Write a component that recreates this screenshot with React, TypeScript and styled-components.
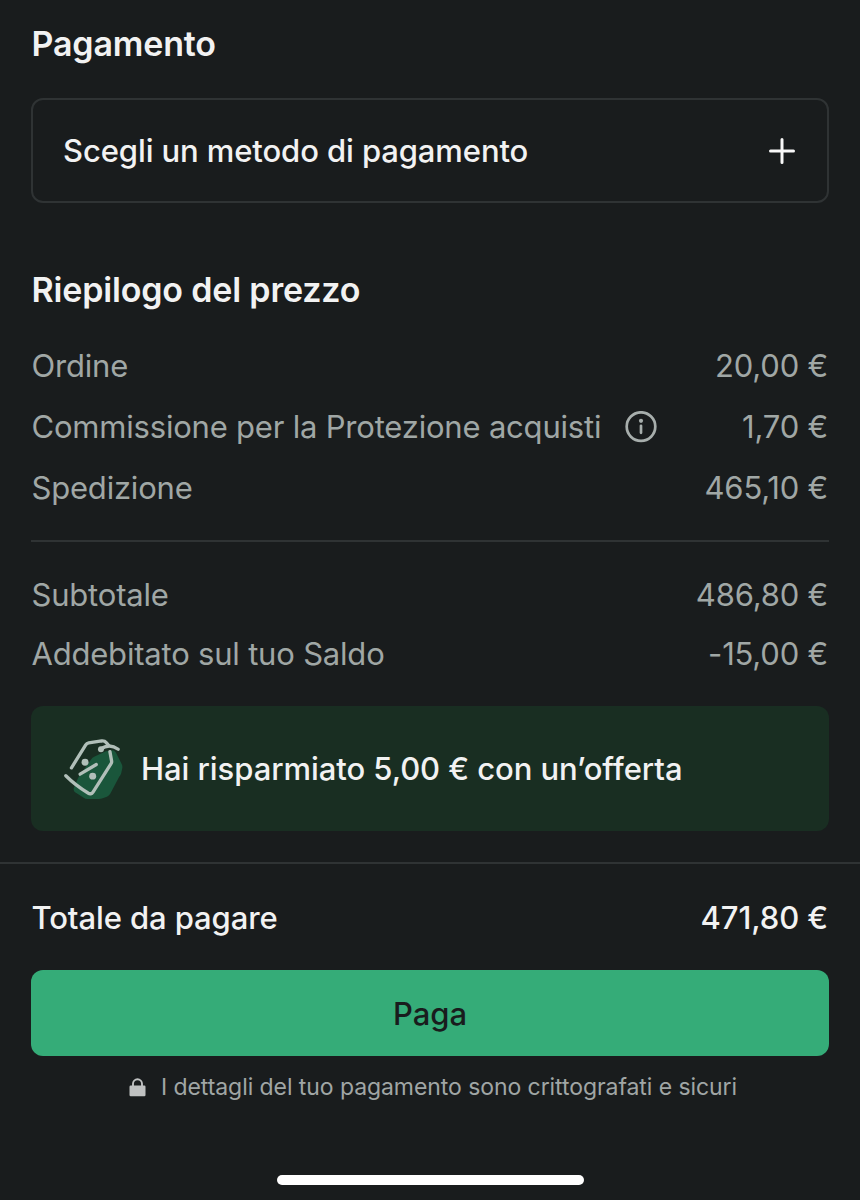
import React from 'react';
import styled, { createGlobalStyle } from 'styled-components';

const GlobalStyle = createGlobalStyle`
  * { box-sizing: border-box; }
  body { margin: 0; background: #191c1d; font-family: Inter, "Liberation Sans", sans-serif; }
`;
const Screen = styled.main`
  width: 860px; height: 1200px; background: #191c1d; color: #f2f2f2;
  display: flex; flex-direction: column; overflow: hidden;
`;
const Section = styled.section`padding: 0 31px;`;
const Heading = styled.h2<{ $top: number }>`
  margin: 0; padding: ${p => p.$top}px 0 0 0.5px; font-size: 34px; line-height: 44px; font-weight: 600; letter-spacing: -0.17px;
`;
const MethodButton = styled.button`
  margin-top: 32px; width: 100%; height: 105px; padding: 0 32px 0 30px; display: flex; align-items: center; justify-content: space-between;
  border: 2px solid #2f3334; border-radius: 12px; background: none; color: inherit; font: 500 31px Inter, sans-serif; letter-spacing: -0.1px;
`;
const Row = styled.div<{ $h: number; $strong?: boolean }>`
  display: flex; align-items: center; justify-content: space-between; height: ${p => p.$h}px; padding: 0 1px 0 0.5px;
  font-size: 31px; font-weight: ${p => (p.$strong ? 500 : 400)}; color: ${p => (p.$strong ? '#f2f2f2' : '#a0a7a5')};
  letter-spacing: ${p => (p.$strong ? '-0.1px' : '-0.2px')};
`;
const Label = styled.span`display: flex; align-items: center; gap: 24px;`;
const Rows = styled.div<{ $top: number }>`padding-top: ${p => p.$top}px;`;
const Divider = styled.div<{ $top: number }>`flex-shrink: 0; height: 2px; background: #2f3334; margin-top: ${p => p.$top}px;`;
const Banner = styled.div`
  margin-top: 23px; height: 125px; border-radius: 12px; background: #192e22; display: flex; align-items: center; gap: 17px;
  padding-left: 33px; font-size: 31px; font-weight: 500; letter-spacing: -0.06px;
`;
const PayButton = styled.button`
  margin-top: 23px; width: 100%; height: 86px; border: 0; border-radius: 12px; background: #35ac78; color: #191c1d;
  font: 500 31px Inter, sans-serif;
`;
const Secure = styled.p`
  margin: 15px 0 0; padding-left: 6px; display: flex; justify-content: center; align-items: center; gap: 15px; height: 32px;
  font-size: 23px; color: #a0a6a5; letter-spacing: -0.07px;
`;
const HomeBar = styled.div`flex-shrink: 0; width: 307px; height: 10px; border-radius: 5px; background: #fff; margin: 72px auto 0;`;

const PlusIcon = () => (
  <svg width="26" height="26" viewBox="0 0 26 26" stroke="#f8f8f8" strokeWidth="3" strokeLinecap="round">
    <path d="M13 1.5v23M1.5 13h23" />
  </svg>
);
const InfoIcon = () => (
  <svg width="32" height="32" viewBox="0 0 32 32" fill="none" stroke="#a7aeac" strokeWidth="2.7" strokeLinecap="round">
    <circle cx="16" cy="15.6" r="14.3" />
    <path d="M16 14.8v7" />
    <circle cx="16" cy="9.8" r="2.1" fill="#a7aeac" stroke="none" />
  </svg>
);
const TagIcon = () => (
  <svg width="60" height="62" viewBox="42 37 180 187" fill="none" stroke="#b1bfb9" strokeWidth="10" strokeLinecap="round" strokeLinejoin="round">
    <path d="M190 74Q195 76 198 81L215 115Q219 122 217 130L214 143Q212 149 208 154L181 205Q177 211 171 214L158 219Q153 221 146 221H112Q106 221 101 217L75 201Q69 196 71 188L84 158Q87 151 92 146L122 103Q127 96 134 93L168 77Z" fill="#1a563b" stroke="none" />
    <path d="M64 127L107 58Q110 53 116 52L155 46Q164 45 169 51L176 59" />
    <path d="M152 71Q178 51 205 71" />
    <path d="M180 78L185 106Q186 111 183 115L129 200Q123 209 114 203Q76 180 47 151" />
    <path d="M90 146L139 117" />
    <g fill="#b1bfb9" stroke="none">
      <circle cx="153" cy="71" r="9" />
      <circle cx="105" cy="110" r="10.5" />
      <circle cx="128" cy="152" r="10.5" />
    </g>
  </svg>
);
const LockIcon = () => (
  <svg width="17" height="19" viewBox="0 0 17 19">
    <path d="M4 9V5.8a4.5 4.5 0 0 1 9 0V9" fill="none" stroke="#bfc1c1" strokeWidth="1.9" />
    <rect x="0.5" y="7.5" width="16" height="10.7" rx="1.2" fill="#bfc1c1" />
  </svg>
);

export default function App() {
  return (
    <Screen>
      <GlobalStyle />
      <Section>
        <Heading $top={22}>Pagamento</Heading>
        <MethodButton>
          <span>Scegli un metodo di pagamento</span>
          <PlusIcon />
        </MethodButton>
        <Heading $top={65}>Riepilogo del prezzo</Heading>
        <Rows $top={23}>
          <Row $h={61}><span>Ordine</span><span>20,00 €</span></Row>
          <Row $h={61}>
            <Label>Commissione per la Protezione acquisti<InfoIcon /></Label>
            <span>1,70 €</span>
          </Row>
          <Row $h={61}><span>Spedizione</span><span>465,10 €</span></Row>
        </Rows>
        <Divider $top={22} />
        <Rows $top={23}>
          <Row $h={59}><span>Subtotale</span><span>486,80 €</span></Row>
          <Row $h={59}><span>Addebitato sul tuo Saldo</span><span>-15,00 €</span></Row>
        </Rows>
        <Banner>
          <TagIcon />
          <span>Hai risparmiato 5,00 € con un’offerta</span>
        </Banner>
      </Section>
      <Divider $top={31} />
      <Section>
        <Rows $top={23}><Row $h={60} $strong><span>Totale da pagare</span><span>471,80 €</span></Row></Rows>
        <PayButton>Paga</PayButton>
        <Secure>
          <LockIcon />
          <span>I dettagli del tuo pagamento sono crittografati e sicuri</span>
        </Secure>
      </Section>
      <HomeBar />
    </Screen>
  );
}
